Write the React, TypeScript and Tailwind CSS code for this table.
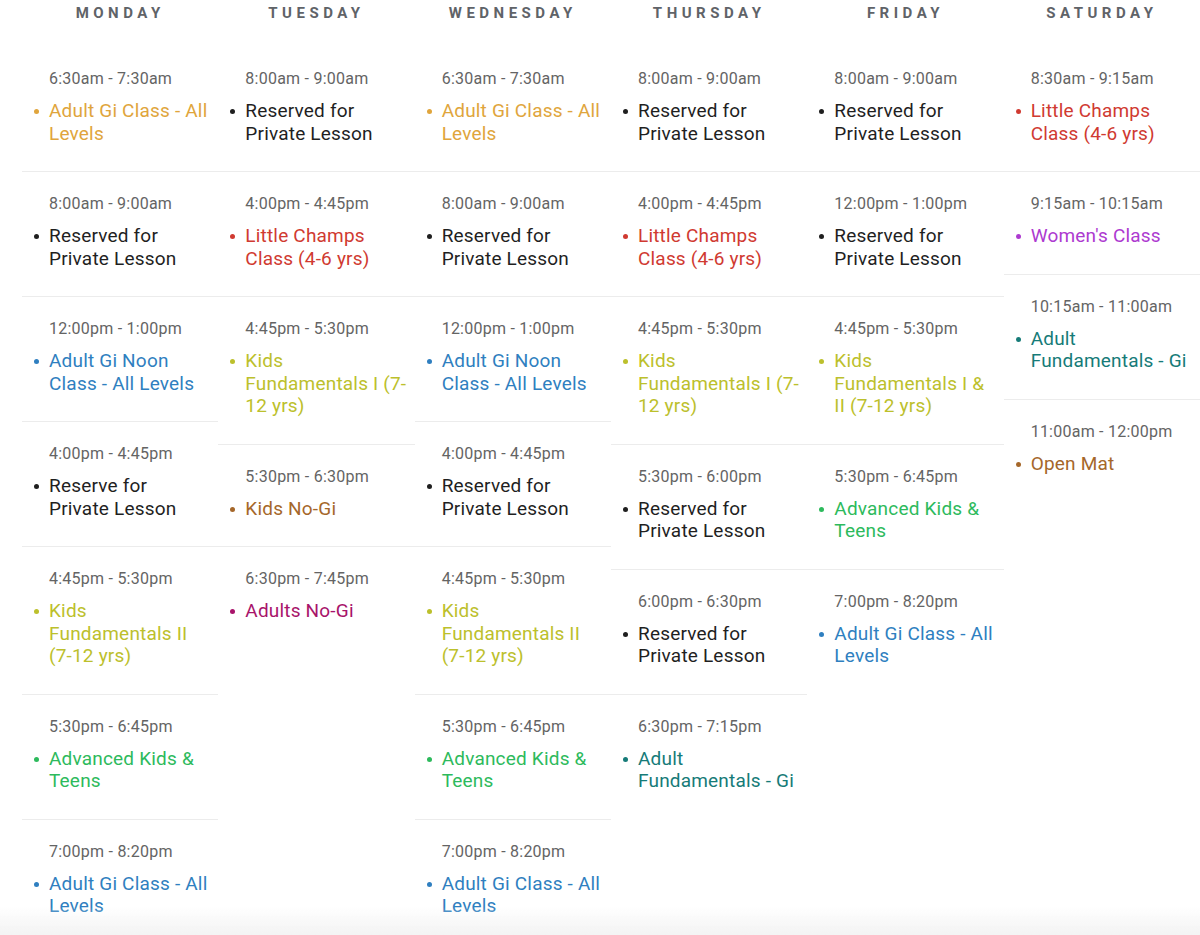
import React from "react";

type Session = {
  time: string;
  title: string;
  color: string;
};

type Day = {
  name: string;
  sessions: Session[];
};

// class colours used on the schedule
const GOLD = "text-[#e0a53c]";
const BLACK = "text-[#1f1f1f]";
const RED = "text-[#d03a31]";
const BLUE = "text-[#2f7fc0]";
const LIME = "text-[#bcc02c]";
const BROWN = "text-[#a5672a]";
const PLUM = "text-[#a8136a]";
const GREEN = "text-[#2dba5c]";
const PURPLE = "text-[#ad3ad0]";
const TEAL = "text-[#167b78]";

const dotColors: Record<string, string> = {
  [GOLD]: "bg-[#e0a53c]",
  [BLACK]: "bg-[#1f1f1f]",
  [RED]: "bg-[#d03a31]",
  [BLUE]: "bg-[#2f7fc0]",
  [LIME]: "bg-[#bcc02c]",
  [BROWN]: "bg-[#a5672a]",
  [PLUM]: "bg-[#a8136a]",
  [GREEN]: "bg-[#2dba5c]",
  [PURPLE]: "bg-[#ad3ad0]",
  [TEAL]: "bg-[#167b78]",
};

const days: Day[] = [
  {
    name: "Monday",
    sessions: [
      { time: "6:30am - 7:30am", title: "Adult Gi Class - All Levels", color: GOLD },
      { time: "8:00am - 9:00am", title: "Reserved for Private Lesson", color: BLACK },
      { time: "12:00pm - 1:00pm", title: "Adult Gi Noon Class - All Levels", color: BLUE },
      { time: "4:00pm - 4:45pm", title: "Reserve for Private Lesson", color: BLACK },
      { time: "4:45pm - 5:30pm", title: "Kids Fundamentals II (7-12 yrs)", color: LIME },
      { time: "5:30pm - 6:45pm", title: "Advanced Kids & Teens", color: GREEN },
      { time: "7:00pm - 8:20pm", title: "Adult Gi Class - All Levels", color: BLUE },
    ],
  },
  {
    name: "Tuesday",
    sessions: [
      { time: "8:00am - 9:00am", title: "Reserved for Private Lesson", color: BLACK },
      { time: "4:00pm - 4:45pm", title: "Little Champs Class (4-6 yrs)", color: RED },
      { time: "4:45pm - 5:30pm", title: "Kids Fundamentals I (7-12 yrs)", color: LIME },
      { time: "5:30pm - 6:30pm", title: "Kids No-Gi", color: BROWN },
      { time: "6:30pm - 7:45pm", title: "Adults No-Gi", color: PLUM },
    ],
  },
  {
    name: "Wednesday",
    sessions: [
      { time: "6:30am - 7:30am", title: "Adult Gi Class - All Levels", color: GOLD },
      { time: "8:00am - 9:00am", title: "Reserved for Private Lesson", color: BLACK },
      { time: "12:00pm - 1:00pm", title: "Adult Gi Noon Class - All Levels", color: BLUE },
      { time: "4:00pm - 4:45pm", title: "Reserved for Private Lesson", color: BLACK },
      { time: "4:45pm - 5:30pm", title: "Kids Fundamentals II (7-12 yrs)", color: LIME },
      { time: "5:30pm - 6:45pm", title: "Advanced Kids & Teens", color: GREEN },
      { time: "7:00pm - 8:20pm", title: "Adult Gi Class - All Levels", color: BLUE },
    ],
  },
  {
    name: "Thursday",
    sessions: [
      { time: "8:00am - 9:00am", title: "Reserved for Private Lesson", color: BLACK },
      { time: "4:00pm - 4:45pm", title: "Little Champs Class (4-6 yrs)", color: RED },
      { time: "4:45pm - 5:30pm", title: "Kids Fundamentals I (7-12 yrs)", color: LIME },
      { time: "5:30pm - 6:00pm", title: "Reserved for Private Lesson", color: BLACK },
      { time: "6:00pm - 6:30pm", title: "Reserved for Private Lesson", color: BLACK },
      { time: "6:30pm - 7:15pm", title: "Adult Fundamentals - Gi", color: TEAL },
    ],
  },
  {
    name: "Friday",
    sessions: [
      { time: "8:00am - 9:00am", title: "Reserved for Private Lesson", color: BLACK },
      { time: "12:00pm - 1:00pm", title: "Reserved for Private Lesson", color: BLACK },
      { time: "4:45pm - 5:30pm", title: "Kids Fundamentals I & II (7-12 yrs)", color: LIME },
      { time: "5:30pm - 6:45pm", title: "Advanced Kids & Teens", color: GREEN },
      { time: "7:00pm - 8:20pm", title: "Adult Gi Class - All Levels", color: BLUE },
    ],
  },
  {
    name: "Saturday",
    sessions: [
      { time: "8:30am - 9:15am", title: "Little Champs Class (4-6 yrs)", color: RED },
      { time: "9:15am - 10:15am", title: "Women's Class", color: PURPLE },
      { time: "10:15am - 11:00am", title: "Adult Fundamentals - Gi", color: TEAL },
      { time: "11:00am - 12:00pm", title: "Open Mat", color: BROWN },
    ],
  },
];

function SessionCell({ session, last }: { session: Session; last: boolean }) {
  return (
    <div
      className={
        "pt-[21px] pb-[26px] pl-[11px] pr-[8px] " +
        (last ? "" : "border-b border-[#ececec]")
      }
    >
      <div className="pl-[16px] text-[16px] leading-[22px] tracking-[0.015em] text-[#646464]">{session.time}</div>
      <div className="mt-[10px] flex items-start">
        <span
          className={"mt-[9px] ml-[1px] mr-[10px] h-[5px] w-[5px] shrink-0 rounded-full " + dotColors[session.color]}
        />
        <span className={"text-[19px] leading-[22.5px] tracking-[0.01em] " + session.color}>{session.title}</span>
      </div>
    </div>
  );
}

export default function App() {
  return (
    <div
      className="relative min-h-[935px] bg-white pl-[22px]"
      style={{ fontFamily: "Roboto, 'Noto Sans', sans-serif" }}
    >
      <div className="grid grid-cols-6">
        {days.map((day) => (
          <div key={day.name} className="flex flex-col">
            <div className="h-[47px] pt-[4px] text-center text-[15px] font-bold uppercase leading-[18px] tracking-[0.3em] text-[#5f6368]">
              {day.name}
            </div>
            {day.sessions.map((s, i) => (
              <SessionCell key={s.time + s.title} session={s} last={i === day.sessions.length - 1} />
            ))}
          </div>
        ))}
      </div>
      <div className="pointer-events-none fixed inset-x-0 bottom-0 h-[28px] bg-gradient-to-b from-white/0 to-[#f3f3f3]" />
    </div>
  );
}
